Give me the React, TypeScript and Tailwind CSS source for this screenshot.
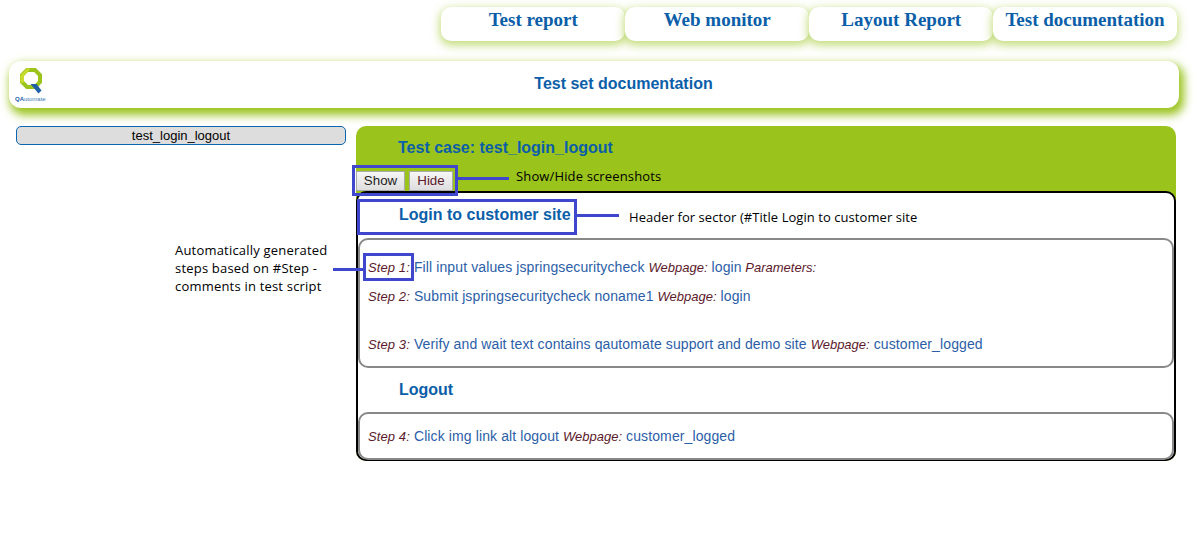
const tabs = ["Test report", "Web monitor", "Layout Report", "Test documentation"];

function Logo() {
  return (
    <div className="flex flex-col w-[36px] shrink-0 ml-[6px] mt-[7px]">
      <svg width="36" height="28" viewBox="0 0 36 28" className="block">
        <path d="M10 2h8l5 5v7l-5 5h-8l-5-5v-7z" transform="translate(2 0)" fill="none" stroke="#9ac31c" strokeWidth="4" />
        <path d="M12 .5l-6.500 6.500v7l1.500 1.500 2-2v-6l3.500-3.500 2.500-3.500z" fill="#c9dc2e" />
        <path d="M15.500 16h6l5 6.500-3 3z" fill="#1f5fa6" />
      </svg>
      <span className="text-[6px] leading-[7px] text-[#3b78b5] font-['Liberation_Sans',sans-serif] whitespace-nowrap">
        <b className="text-[#1f5fa6]">QA</b>utomate
      </span>
    </div>
  );
}

function Step({ n, text, page, params, className }: { n: number; text: string; page: string; params?: boolean; className?: string }) {
  return (
    <p className={`text-[14px] leading-[16px] tracking-[0.11px] text-[#2b5ea7] whitespace-nowrap ${className ?? ""}`}>
      <i className="text-[13px] tracking-[0.1px] text-[#5c1a2b]">Step {n}:</i> {text}{" "}
      <i className="text-[13px] tracking-normal text-[#5c1a2b]">Webpage:</i> {page}
      {params && <i className="text-[13px] tracking-normal text-[#5c1a2b]"> Parameters:</i>}
    </p>
  );
}

export default function App() {
  return (
    <div className="relative w-[1201px] h-[554px] overflow-hidden bg-white font-['Liberation_Sans',Arial,sans-serif]">
      <nav className="flex gap-[0.5px] pl-[441px] pt-[7px]">
        {tabs.map((t, i) => (
          <a
            key={t}
            className={`h-[34px] rounded-[10px] bg-white shadow-[0_3px_10px_1px_rgba(154,195,28,0.6)] text-center font-['Liberation_Serif',serif] font-bold text-[19px] leading-[26px] text-[#0b5ea8] ${i === 3 ? "w-[184px]" : "w-[183.5px] pl-[1px]"}`}
          >
            {t}
          </a>
        ))}
      </nav>

      <header className="flex ml-[9px] mt-[20px] w-[1170px] h-[47px] rounded-[12px] bg-white shadow-[3px_5px_10px_2px_#9ac31c]">
        <Logo />
        <h1 className="flex-1 pl-[17px] pt-[13px] text-center text-[16px] leading-[20px] font-bold text-[#0b5ea8]">
          Test set documentation
        </h1>
      </header>

      <main className="flex gap-[10px] mt-[18px] pl-[16px]">
        <aside className="w-[330px]">
          <button className="block w-full h-[19px] rounded-[5px] border border-[#0b66b0] bg-[#dddddd] text-[13px] leading-[16px] text-black">
            test_login_logout
          </button>
        </aside>

        <section className="w-[820px] h-[335px] rounded-[10px] bg-[#9ac31c]">
          <h2 className="pl-[42px] pt-[12px] h-[45px] text-[16px] leading-[19px] font-bold text-[#0b5ea8]">
            Test case: test_login_logout
          </h2>
          <div className="flex gap-[4px] h-[20px]">
            <button className="w-[49px] h-[20px] border border-[#a9a9a9] bg-gradient-to-b from-[#f6f6f6] to-[#dedede] text-[13.33px] leading-[16px] text-[#222222]">
              Show
            </button>
            <button className="w-[44px] h-[20px] border border-[#a9a9a9] bg-gradient-to-b from-[#f6f6f6] to-[#dedede] text-[13.33px] leading-[16px] text-[#5c1a2b]">
              Hide
            </button>
          </div>

          <div className="h-[270px] rounded-[10px] border-2 border-black bg-white">
            <h3 className="pl-[41px] pt-[12px] h-[45px] text-[16px] leading-[19px] font-bold text-[#0b5ea8]">
              Login to customer site
            </h3>
            <div className="h-[130px] rounded-[10px] border-2 border-[#888888] bg-white pl-[8px] pt-[19px]">
              <Step n={1} text="Fill input values jspringsecuritycheck" page="login" params />
              <Step n={2} text="Submit jspringsecuritycheck noname1" page="login" className="mt-[12px]" />
              <Step n={3} text="Verify and wait text contains qautomate support and demo site" page="customer_logged" className="mt-[31px]" />
            </div>
            <h3 className="pl-[41px] pt-[12px] h-[44px] text-[16px] leading-[19px] font-bold text-[#0b5ea8]">Logout</h3>
            <div className="h-[48px] rounded-[10px] border-2 border-[#888888] bg-white pl-[8px] pt-[14px]">
              <Step n={4} text="Click img link alt logout" page="customer_logged" />
            </div>
          </div>
        </section>
      </main>

      {/* annotations drawn over the page */}
      <div className="absolute left-[352px] top-[165px] flex items-start font-['Open_Sans',sans-serif] text-[13px] leading-[18px] text-black whitespace-nowrap">
        <div className="w-[106px] h-[31px] border-[3px] border-[#3f48cc]" />
        <div className="w-[51px] h-[3px] mt-[12px] bg-[#3f48cc]" />
        <span className="ml-[7px] mt-[2px] tracking-[0.14px]">Show/Hide screenshots</span>
      </div>

      <div className="absolute left-[357px] top-[199px] flex items-start font-['Open_Sans',sans-serif] text-[13px] leading-[18px] text-black whitespace-nowrap">
        <div className="w-[220px] h-[36px] border-[3px] border-[#3f48cc]" />
        <div className="w-[42px] h-[3px] mt-[15px] bg-[#3f48cc]" />
        <span className="ml-[10px] mt-[9px] tracking-[0.06px]">Header for sector (#Title Login to customer site</span>
      </div>

      <div className="absolute left-[175px] top-[241px] flex items-start font-['Open_Sans',sans-serif] text-[13px] leading-[18px] text-black whitespace-nowrap">
        <p className="w-[158px] tracking-[0.2px]">
          Automatically generated<br />
          steps based on #Step -<br />
          comments in test script
        </p>
        <div className="w-[30px] h-[3px] mt-[27px] bg-[#3f48cc]" />
        <div className="w-[51px] h-[28px] mt-[12px] border-[3px] border-[#3f48cc]" />
      </div>
    </div>
  );
}
